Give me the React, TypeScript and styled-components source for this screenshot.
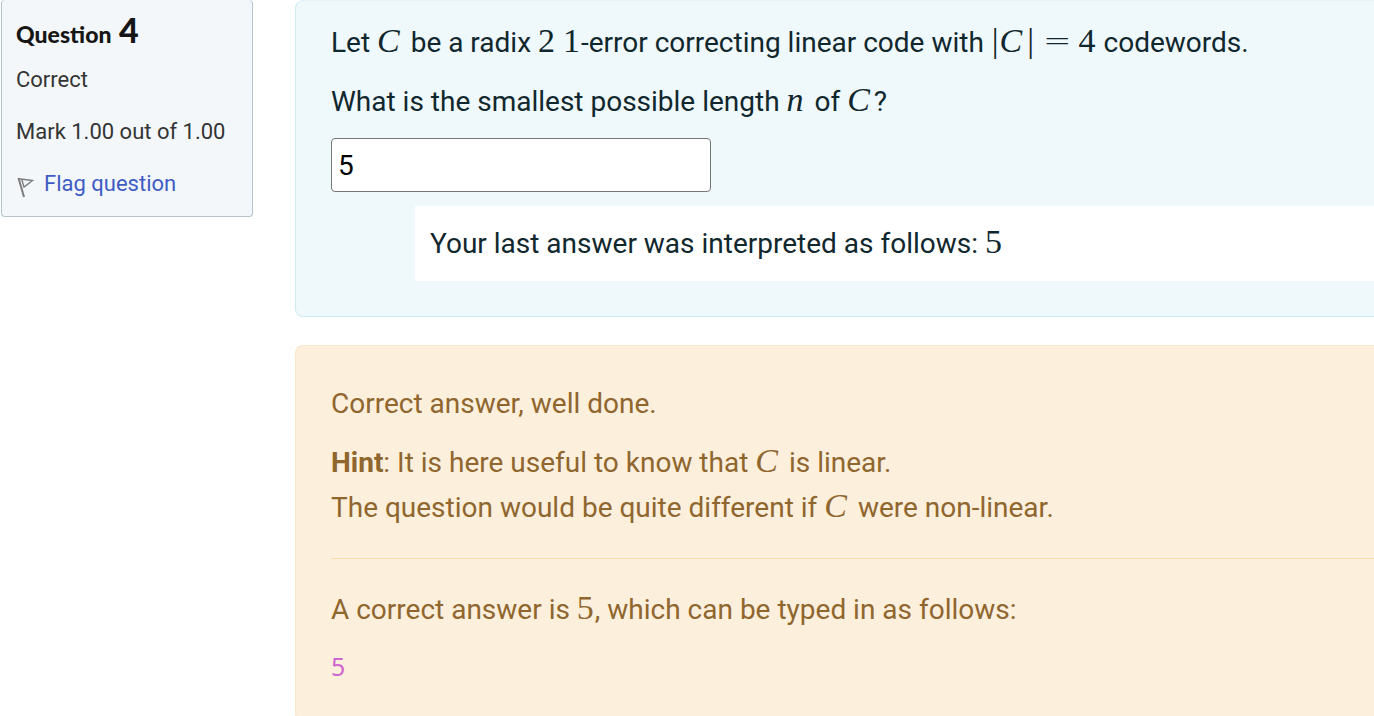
import React from "react";
import styled, { createGlobalStyle } from "styled-components";

const GlobalStyle = createGlobalStyle`
  *, *::before, *::after { box-sizing: border-box; }
  body {
    margin: 0;
    background: #ffffff;
    font-family: Roboto, "Liberation Sans", sans-serif;
    overflow-x: hidden;
  }
`;

const Question = styled.main`
  display: flex;
  align-items: flex-start;
  gap: 42px;
  padding-left: 1px;
`;

const Info = styled.aside`
  flex: 0 0 252px;
  padding: 14px 14px 16px;
  background: #f3f7fa;
  border: 1px solid #b3c4cb;
  border-top: 0;
  border-radius: 4px;
  color: #343434;
  font-size: 22px;
  line-height: 32px;
`;

const Heading = styled.h3`
  margin: 0 0 14px;
  font-family: Lato, sans-serif;
  font-weight: 900;
  font-size: 23px;
  line-height: 32px;
  color: #161616;
`;

const QuestionNumber = styled.span`
  margin-left: 2px;
  font-size: 34px;
`;

const InfoLine = styled.div`
  margin-bottom: 20px;
`;

const FlagLink = styled.a`
  display: flex;
  align-items: center;
  gap: 8px;
  color: #405cc4;
  text-decoration: none;
`;

const Content = styled.div`
  flex: 1;
  min-width: 0;
  display: flex;
  flex-direction: column;
  gap: 28px;
  font-size: 28px;
  line-height: 45px;
`;

const Panel = styled.section`
  border-style: solid;
  border-width: 1px 0 1px 1px;
  border-radius: 8px 0 0 8px;
  padding-left: 35px;
`;

const Formulation = styled(Panel)`
  padding-top: 19px;
  padding-bottom: 35px;
  background: #eff8fb;
  border-color: #cdebf3;
  border-top-color: #e3f3f8;
  color: #11272e;
`;

const Outcome = styled(Panel)`
  padding-top: 35px;
  padding-bottom: 35px;
  background: #fcefdc;
  border-color: #fae7c8;
  color: #8f662e;
`;

const Paragraph = styled.p`
  margin: 0 0 14px;
`;

const AnswerInput = styled.input`
  display: block;
  width: 380px;
  height: 54px;
  padding: 0 6px;
  border: 1px solid #767676;
  border-radius: 4px;
  background: #ffffff;
  color: #000000;
  font-family: inherit;
  font-size: 28px;
`;

const Validation = styled.div`
  margin: 14px 0 0 84px;
  padding: 15px;
  background: #ffffff;
`;

const Rule = styled.hr`
  margin: 28px 0;
  border: 0;
  border-top: 1px solid #fddfac;
`;

const Code = styled.code`
  display: block;
  font-family: "Noto Sans", sans-serif;
  font-size: 25px;
  line-height: 40px;
  color: #cf66cf;
`;

const Maths = styled.span<{ $italic?: boolean }>`
  font-family: "Liberation Serif", serif;
  font-style: ${(p) => (p.$italic ? "italic" : "normal")};
  font-size: 34px;
  line-height: 1;
  padding-right: ${(p) => (p.$italic ? "4px" : "1px")};
`;

const Bar = styled(Maths)`
  padding: 0 1px;
`;

const Relation = styled(Maths)`
  font-family: "DejaVu Sans", sans-serif;
  font-weight: 200;
  padding: 0 7px 0 8px;
`;

const V = ({ children }: { children: React.ReactNode }) => <Maths $italic>{children}</Maths>;

const FlagIcon = () => (
  <svg width="20" height="28" viewBox="0 0 20 28" fill="none" stroke="#7d7d7d" aria-hidden="true">
    <path d="M2.500 8L8 27" strokeWidth="2" />
    <path d="M2.500 8.700L16.500 10.500L8 17L5.700 9.500" strokeWidth="1.400" />
  </svg>
);

export default function App() {
  return (
    <>
      <GlobalStyle />
      <Question>
        <Info>
          <Heading>
            Question <QuestionNumber>4</QuestionNumber>
          </Heading>
          <InfoLine>Correct</InfoLine>
          <InfoLine>Mark 1.00 out of 1.00</InfoLine>
          <FlagLink href="#flag">
            <FlagIcon />
            Flag question
          </FlagLink>
        </Info>
        <Content>
          <Formulation>
            <Paragraph>
              Let <V>C</V> be a radix <Maths>2</Maths> <Maths>1</Maths>-error correcting linear code with{" "}
              <Bar>|</Bar><V>C</V><Bar>|</Bar><Relation>=</Relation><Maths>4</Maths> codewords.
            </Paragraph>
            <Paragraph>
              What is the smallest possible length <V>n</V> of <V>C</V>?
            </Paragraph>
            <AnswerInput type="text" defaultValue="5" aria-label="Answer" />
            <Validation>
              Your last answer was interpreted as follows: <Maths>5</Maths>
            </Validation>
          </Formulation>
          <Outcome>
            <Paragraph>Correct answer, well done.</Paragraph>
            <Paragraph>
              <strong>Hint</strong>: It is here useful to know that <V>C</V> is linear.
              <br />
              The question would be quite different if <V>C</V> were non-linear.
            </Paragraph>
            <Rule />
            <Paragraph>
              A correct answer is <Maths>5</Maths>, which can be typed in as follows:
            </Paragraph>
            <Code>5</Code>
          </Outcome>
        </Content>
      </Question>
    </>
  );
}
